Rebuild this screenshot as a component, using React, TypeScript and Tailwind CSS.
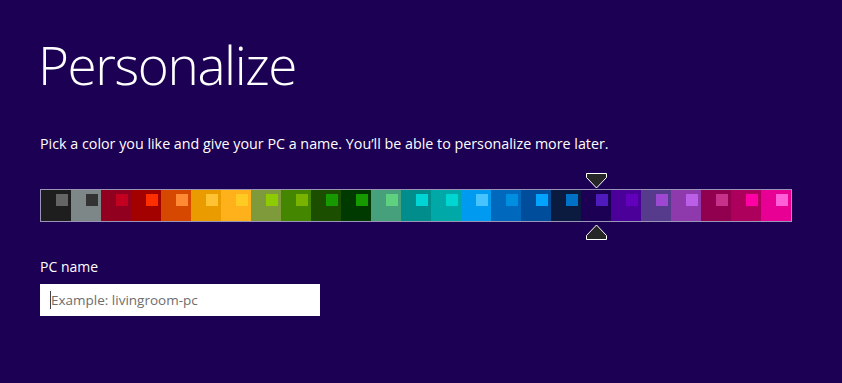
import React from "react";

const swatches: [string, string][] = [
  ["#1e1e1e", "#646464"],
  ["#7e8787", "#333333"],
  ["#920020", "#c2001f"],
  ["#a30000", "#ff2e00"],
  ["#d64700", "#ff8a33"],
  ["#e99b00", "#ffc232"],
  ["#feb11a", "#ffcb22"],
  ["#7f9a3a", "#8ecb00"],
  ["#458600", "#78b300"],
  ["#1c4e00", "#179a00"],
  ["#003a00", "#179a00"],
  ["#45a07b", "#5ed07e"],
  ["#008d8b", "#00d4d4"],
  ["#00a9a8", "#00d5d2"],
  ["#009af0", "#47c4ff"],
  ["#0069bd", "#008ee0"],
  ["#004e9b", "#00a4ff"],
  ["#0b1b40", "#0072c6"],
  ["#1c0053", "#4f1bbd"],
  ["#4b009a", "#6300bb"],
  ["#563a8c", "#9c48d2"],
  ["#8f3aac", "#bb5fe8"],
  ["#91004f", "#c8318a"],
  ["#ad005d", "#ff00a4"],
  ["#e80095", "#ff5fd7"],
];

const selected = 18;

function Arrow({ up }: { up?: boolean }) {
  return (
    <svg width="21" height="16" viewBox="0 0 21 16" className={up ? "rotate-180" : ""}>
      <path d="M0.5 0.5 H20.5 V4.5 L10.5 15 L0.5 4.5 Z" fill="#262626" stroke="#ffffff" strokeWidth="1" />
    </svg>
  );
}

export default function App() {
  return (
    <div
      className="w-[842px] h-[383px] bg-[#1c0053] text-white pl-10 pt-[38px] overflow-hidden"
      style={{ fontFamily: "'Segoe UI', 'Open Sans', sans-serif" }}
    >
      <h1 className="text-[53px] font-light leading-none tracking-[-1.4px] -ml-[2px]">Personalize</h1>
      <p className="mt-[43px] text-[14.3px] leading-5">
        Pick a color you like and give your PC a name. You’ll be able to personalize more later.
      </p>
      <div className="mt-[35px] flex w-max border border-[#9a94b8]">
        {swatches.map(([bg, sq], i) => (
          <div key={i} className="relative w-[30px] h-[31px] flex justify-end items-start pt-[4px] pr-[3px]" style={{ backgroundColor: bg }}>
            <div className="w-3 h-3" style={{ backgroundColor: sq }} />
            {i === selected && (
              <>
                <div className="absolute left-[5px] -top-[17px] flex">
                  <Arrow />
                </div>
                <div className="absolute left-[5px] -bottom-[19px] flex">
                  <Arrow up />
                </div>
              </>
            )}
          </div>
        ))}
      </div>
      <div className="mt-[35px] text-[14px] leading-5">PC name</div>
      <div className="mt-[7px] w-[280px] h-[32px] bg-white flex items-center pl-[10px]">
        <span className="w-px h-[18px] bg-[#444]" />
        <span className="text-[13.5px] text-[#6d6d6d]">Example: livingroom-pc</span>
      </div>
    </div>
  );
}
